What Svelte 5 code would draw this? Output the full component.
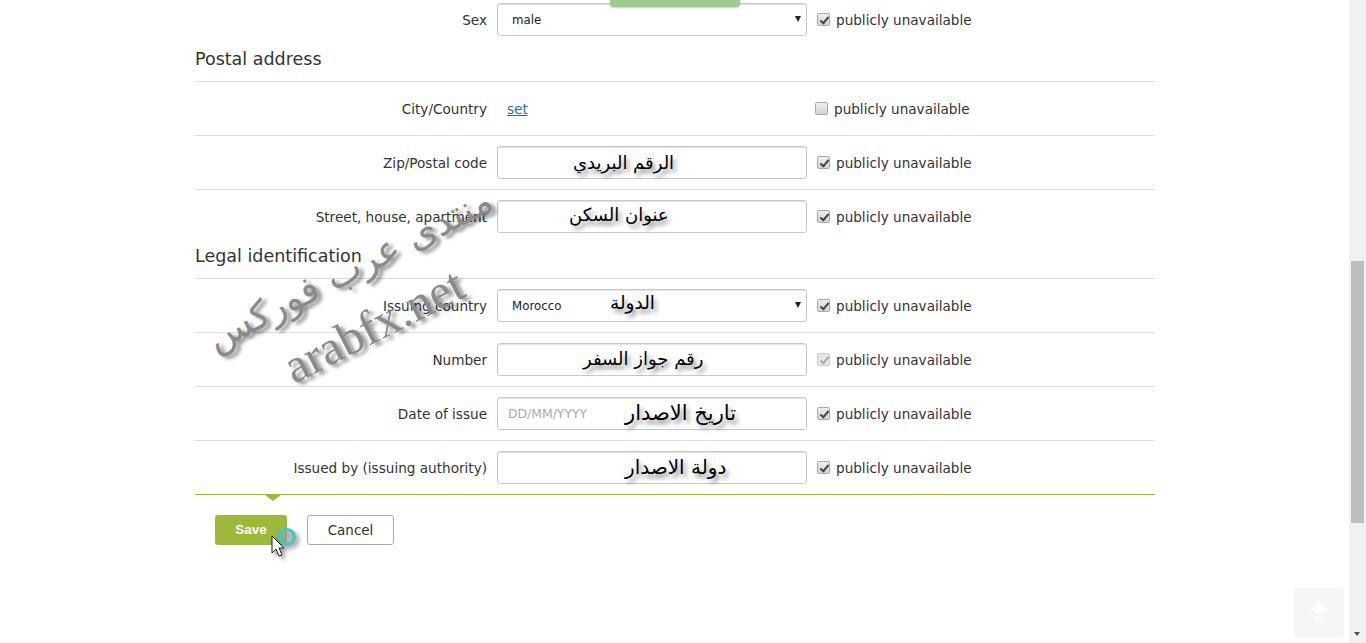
<script>
    const postal = [
        { label: 'City/Country', link: 'set', checked: false },
        { label: 'Zip/Postal code', note: 'الرقم البريدي', noteLeft: 76, noteSize: 18, noteTop: 3, checked: true },
        { label: 'Street, house, apartment', note: 'عنوان السكن', noteLeft: 72, noteSize: 18, noteTop: 1, checked: true }
    ]

    const legal = [
        { label: 'Issuing country', select: 'Morocco', note: 'الدولة', noteLeft: 113, noteSize: 18.5, noteTop: 0, checked: true },
        { label: 'Number', note: 'رقم جواز السفر', noteLeft: 86, noteSize: 18, noteTop: 2, checked: true, disabled: true },
        { label: 'Date of issue', placeholder: 'DD/MM/YYYY', note: 'تاريخ الاصدار', noteLeft: 128, noteSize: 21, noteTop: 2, checked: true },
        { label: 'Issued by (issuing authority)', note: 'دولة الاصدار', noteLeft: 128, noteSize: 20, noteTop: 2, checked: true }
    ]
</script>

{#snippet row(item)}
    <div class="row" class:linked={item.link}>
        <span class="label">{item.label}</span>
        {#if item.link}
            <div class="field"><a href="#/">{item.link}</a></div>
        {:else}
            <div class="field">
                {#if item.select}
                    <select><option>{item.select}</option></select>
                {:else}
                    <input type="text" placeholder={item.placeholder} />
                {/if}
                {#if item.note}
                    <span class="note" style="left: {item.noteLeft}px; top: {item.noteTop}px; font-size: {item.noteSize}px">{item.note}</span>
                {/if}
            </div>
        {/if}
        <label class="public">
            <input type="checkbox" checked={item.checked} disabled={item.disabled} />
            publicly unavailable
        </label>
    </div>
{/snippet}

<div class="page">
    <main>
        <div class="tab"></div>
        <form class="form">
            <div class="row">
                <span class="label">Sex</span>
                <div class="field">
                    <select><option>male</option></select>
                </div>
                <label class="public">
                    <input type="checkbox" checked />
                    publicly unavailable
                </label>
            </div>

            <h2>Postal address</h2>
            {#each postal as item}
                {@render row(item)}
            {/each}

            <h2>Legal identification</h2>
            {#each legal as item}
                {@render row(item)}
            {/each}

            <div class="actions">
                <button type="button" class="save">Save</button>
                <button type="button" class="cancel">Cancel</button>
                <svg class="cursor" width="30" height="44" viewBox="0 0 30 44">
                    <circle cx="16" cy="9" r="6" fill="#a9b8c6" opacity="0.6" />
                    <circle cx="16" cy="9" r="7.5" fill="none" stroke="#45c6c0" stroke-width="3" />
                    <path d="M1 8 L1 25 L5 21 L8 28 L11 27 L8 20 L13 20 Z" fill="#fff" stroke="#222" stroke-width="1" />
                </svg>
            </div>

            <div class="watermark">
                <span class="arabic">منتدى عرب فوركس</span>
                <span class="latin">arabfx.net</span>
            </div>
        </form>

        <button type="button" class="totop" aria-label="Back to top">
            <svg width="20" height="24" viewBox="0 0 20 24">
                <path d="M10 0 L19 10 L14 10 L14 13 L6 13 L6 10 L1 10 Z" fill="#fff" />
                <path d="M6 15h8v2H6zM7 19h6v1H7zM7 22h6v1H7z" fill="#fff" />
            </svg>
        </button>
    </main>

    <div class="scrollbar">
        <div class="thumb"></div>
        <div class="down"></div>
    </div>
</div>

<style>
    :global(body) {
        overflow: hidden;
        background: #fff;
    }

    .page {
        display: flex;
        height: 643px;
        overflow: hidden;
        font-family: "DejaVu Sans", Verdana, sans-serif;
        font-size: 13.6px;
        color: #333;
    }

    main {
        position: relative;
        flex: 1;
    }

    .tab {
        position: absolute;
        left: 610px;
        top: 0;
        z-index: 3;
        width: 130px;
        height: 7px;
        background: #9fcc8e;
        border-radius: 0 0 4px 4px;
        box-shadow: 0 1px 2px rgba(0, 0, 0, 0.2);
    }

    .form {
        position: relative;
        width: 960px;
        margin-left: 195px;
        padding-top: 3px;
    }

    h2 {
        margin: 0;
        height: 46px;
        box-sizing: border-box;
        padding-top: 11px;
        border-bottom: 1px solid #ddd;
        font-size: 17.5px;
        line-height: 24px;
        font-weight: normal;
    }

    .row {
        display: flex;
        align-items: center;
        height: 33px;
        padding: 10px 0;
        border-bottom: 1px solid #ddd;
    }

    .row:first-child,
    .row:has(+ h2) {
        padding-top: 0;
        padding-bottom: 0;
        border-bottom: 0;
    }

    .row:has(+ h2) {
        padding-top: 10px;
    }

    .row:has(+ .actions) {
        border-bottom: 1px solid #9db83a;
    }

    .label {
        width: 292px;
        padding-top: 1px;
        text-align: right;
    }

    .field {
        position: relative;
        width: 310px;
        height: 33px;
        margin-left: 10px;
    }

    .field a {
        display: block;
        padding-left: 10px;
        line-height: 34px;
        color: #1c6fb5;
    }

    input[type="text"],
    select {
        display: block;
        box-sizing: border-box;
        width: 100%;
        height: 100%;
        padding: 0 10px;
        border: 1px solid #c8c8c8;
        border-radius: 3px;
        box-shadow: inset 0 1px 1px rgba(0, 0, 0, 0.12);
        background: #fff;
        font: 11.8px "DejaVu Sans", Verdana, sans-serif;
        color: #222;
    }

    input[type="text"]::placeholder {
        color: #aaa;
        font-size: 12.4px;
        opacity: 1;
    }

    select {
        appearance: none;
        padding-left: 14px;
    }

    .field:has(select)::after {
        content: "";
        position: absolute;
        right: 6px;
        top: 13px;
        border: 3.5px solid transparent;
        border-top: 6px solid #222;
        border-bottom: 0;
    }

    .note {
        position: absolute;
        font-family: "DejaVu Sans", sans-serif;
        line-height: 28px;
        color: #000;
        text-shadow: 3px 4px 4px rgba(0, 0, 0, 0.45);
        pointer-events: none;
        white-space: nowrap;
    }

    .public {
        display: flex;
        align-items: center;
        margin-left: 10px;
        padding-top: 1px;
    }

    .linked .public {
        margin-left: 8px;
    }

    .public input {
        appearance: none;
        position: relative;
        width: 13px;
        height: 13px;
        margin: -1px 6px 0 0;
        border: 1px solid #a9a9a9;
        border-radius: 2px;
        background: linear-gradient(#eee, #d4d4d4);
    }

    .public input:checked::after {
        content: "";
        position: absolute;
        left: 3.5px;
        top: 0.5px;
        width: 3px;
        height: 7px;
        border: solid #444;
        border-width: 0 2px 2px 0;
        transform: rotate(40deg);
    }

    .public input:disabled {
        background: #e6e6e6;
        border-color: #ccc;
    }

    .public input:disabled:checked::after {
        border-color: #aaa;
    }

    .actions {
        position: relative;
        display: flex;
        gap: 20px;
        padding: 20px 0 0 20px;
    }

    .actions::before {
        content: "";
        position: absolute;
        left: 70px;
        top: 0;
        border: 8px solid transparent;
        border-top: 6px solid #9db83a;
        border-bottom: 0;
    }

    .actions button {
        height: 30px;
        border-radius: 3px;
        font-size: 13.5px;
    }

    .save {
        width: 72px;
        padding: 0 0 2px;
        border: 0;
        background: #9db83a;
        color: #fff;
        font-family: "Liberation Sans", Arial, sans-serif;
        font-weight: bold;
    }

    .cancel {
        width: 87px;
        padding: 0;
        border: 1px solid #aaa;
        background: #fff;
        color: #333;
        font-family: "DejaVu Sans", Verdana, sans-serif;
    }

    .cursor {
        position: absolute;
        left: 76px;
        top: 33px;
        filter: drop-shadow(3px 3px 2px rgba(0, 0, 0, 0.4));
    }

    .watermark {
        position: absolute;
        left: 0;
        top: 0;
        pointer-events: none;
    }

    .watermark span {
        position: absolute;
        white-space: nowrap;
        color: #8a8a8a;
        text-shadow: 3px 4px 4px rgba(0, 0, 0, 0.45);
        transform: rotate(-27deg);
        transform-origin: left bottom;
    }

    .arabic {
        left: 24px;
        top: 316px;
        font: 37.5px "DejaVu Sans", sans-serif;
    }

    .latin {
        left: 104px;
        top: 339px;
        font: 48.5px "Liberation Serif", serif;
    }

    .totop {
        position: absolute;
        right: 5px;
        top: 588px;
        display: flex;
        align-items: center;
        justify-content: center;
        width: 50px;
        height: 50px;
        padding: 0;
        border: 0;
        border-radius: 4px;
        background: #f6f6f6;
    }

    .scrollbar {
        position: relative;
        width: 17px;
        background: #f1f1f1;
    }

    .thumb {
        position: absolute;
        left: 2px;
        top: 261px;
        width: 13px;
        height: 262px;
        background: #bebebe;
    }

    .down {
        position: absolute;
        left: 5px;
        top: 632px;
        border: 3.5px solid transparent;
        border-top: 4px solid #505050;
        border-bottom: 0;
    }
</style>
